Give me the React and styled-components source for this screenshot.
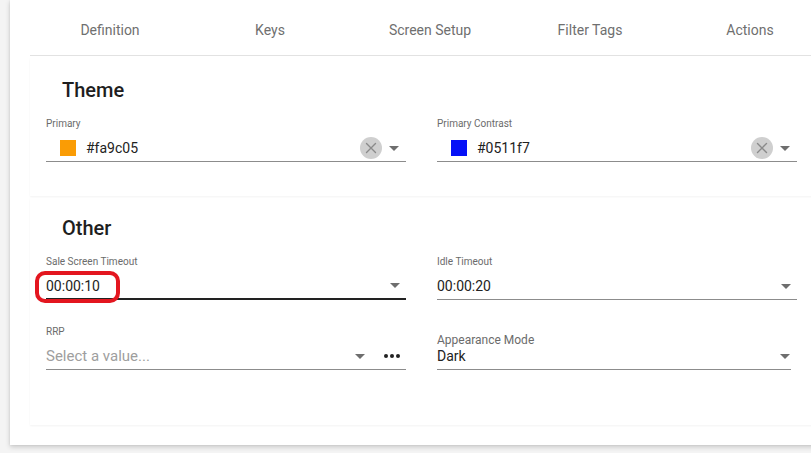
import styled, { createGlobalStyle } from 'styled-components';

const GlobalStyle = createGlobalStyle`
  html, body {
    margin: 0;
    padding: 0;
    background: #f4f4f4;
    overflow: hidden;
    font-family: Roboto, 'Noto Sans', Arial, sans-serif;
  }
`;

const Page = styled.div`
  padding: 0 0 10px 10px;
  width: 811px;
  box-sizing: border-box;
  overflow: hidden;
`;

const Card = styled.div`
  background: #fff;
  width: 840px;
  padding: 0 20px 20px 20px;
  box-sizing: border-box;
  box-shadow: 0 2px 5px rgba(0,0,0,0.18), 0 0 2px rgba(0,0,0,0.08);
`;

const TabBar = styled.div`
  display: grid;
  grid-template-columns: repeat(5, 160px);
  padding-top: 4px;
  border-bottom: 1px solid #e2e2e2;
`;

const Tab = styled.div`
  height: 51px;
  display: flex;
  align-items: center;
  justify-content: center;
  font-size: 14px;
  color: #6f6f6f;
`;

const Section = styled.div`
  margin-top: 2px;
  padding: ${p => p.$top}px 0 ${p => p.$bottom}px 0;
  box-shadow: 0 1px 2px rgba(0,0,0,0.05);
`;

const Title = styled.div`
  padding-left: 32px;
  font-size: 20px;
  line-height: 24px;
  font-weight: 500;
  color: #1e1e1e;
  margin-bottom: 16px;
`;

const Grid = styled.div`
  display: grid;
  grid-template-columns: 360px 360px;
  column-gap: 31px;
  row-gap: 26px;
  padding-left: 16px;
`;

const Field = styled.div`
  position: relative;
`;

const Label = styled.div`
  font-size: 10px;
  line-height: 12px;
  color: #6b6b6b;
`;

const FloatLabel = styled.div`
  margin-top: 7px;
  font-size: 12px;
  line-height: 14px;
  color: #6b6b6b;
`;

const InputRow = styled.div`
  display: flex;
  align-items: center;
  box-sizing: border-box;
  height: ${p => (p.$compact ? 23 : 32)}px;
  padding: ${p => (p.$compact ? '0 0 4px 0' : '5px 0 0 0')};
  margin-right: ${p => (p.$compact ? 6 : 0)}px;
  border-bottom: ${p => (p.$focused ? '2px solid #222' : '1px solid #8c8c8c')};
  font-size: 14px;
  color: #222;
`;

const Swatch = styled.span`
  width: 16px;
  height: 16px;
  margin: 0 10px 0 14px;
  background: ${p => p.$color};
`;

const Value = styled.span`
  flex: 1;
  color: ${p => (p.$placeholder ? '#9e9e9e' : '#222')};
  font-size: ${p => (p.$placeholder ? 15 : 14)}px;
`;

const ClearBtn = styled.span`
  width: 22px;
  height: 22px;
  border-radius: 50%;
  background: #cfcfcf;
  display: flex;
  align-items: center;
  justify-content: center;
  margin-right: 7px;
`;

const Arrow = styled.span`
  width: 0;
  height: 0;
  border-left: 5px solid transparent;
  border-right: 5px solid transparent;
  border-top: 5px solid #6e6e6e;
  margin-right: ${p => p.$mr ?? 6}px;
`;

const Dots = styled.span`
  display: flex;
  gap: 2px;
  margin: 0 6px 0 19px;
  span {
    width: 4px;
    height: 4px;
    border-radius: 50%;
    background: #222;
  }
`;

const Highlight = styled.div`
  position: absolute;
  left: -11px;
  top: 15px;
  width: 85px;
  height: 32px;
  box-sizing: border-box;
  border: 4px solid #e3161f;
  border-radius: 10px;
  pointer-events: none;
`;

function Clear() {
  return (
    <ClearBtn>
      <svg width="12" height="12" viewBox="0 0 12 12">
        <path d="M1.5 1.5 L10.5 10.5 M10.5 1.5 L1.5 10.5" stroke="#8a8a8a" strokeWidth="1.4" strokeLinecap="round" />
      </svg>
    </ClearBtn>
  );
}

const tabs = ['Definition', 'Keys', 'Screen Setup', 'Filter Tags', 'Actions'];

function ColorField({ label, color }) {
  return (
    <Field>
      <Label>{label}</Label>
      <InputRow>
        <Swatch $color={color} />
        <Value>{color}</Value>
        <Clear />
        <Arrow $mr={7} />
      </InputRow>
    </Field>
  );
}

function App() {
  return (
    <>
      <GlobalStyle />
      <Page>
        <Card>
          <TabBar>
            {tabs.map(t => <Tab key={t}>{t}</Tab>)}
          </TabBar>

          <Section $top={20} $bottom={34}>
            <Title>Theme</Title>
            <Grid>
              <ColorField label="Primary" color="#fa9c05" />
              <ColorField label="Primary Contrast" color="#0511f7" />
            </Grid>
          </Section>

          <Section $top={18} $bottom={55}>
            <Title>Other</Title>
            <Grid>
              <Field>
                <Label>Sale Screen Timeout</Label>
                <InputRow $focused>
                  <Value>00:00:10</Value>
                  <Arrow />
                </InputRow>
                <Highlight />
              </Field>
              <Field>
                <Label>Idle Timeout</Label>
                <InputRow>
                  <Value>00:00:20</Value>
                  <Arrow />
                </InputRow>
              </Field>
              <Field>
                <Label>RRP</Label>
                <InputRow>
                  <Value $placeholder>Select a value...</Value>
                  <Arrow $mr={0} />
                  <Dots><span /><span /><span /></Dots>
                </InputRow>
              </Field>
              <Field>
                <FloatLabel>Appearance Mode</FloatLabel>
                <InputRow $compact>
                  <Value>Dark</Value>
                  <Arrow $mr={1} />
                </InputRow>
              </Field>
            </Grid>
          </Section>
        </Card>
      </Page>
    </>
  );
}

export default App;
